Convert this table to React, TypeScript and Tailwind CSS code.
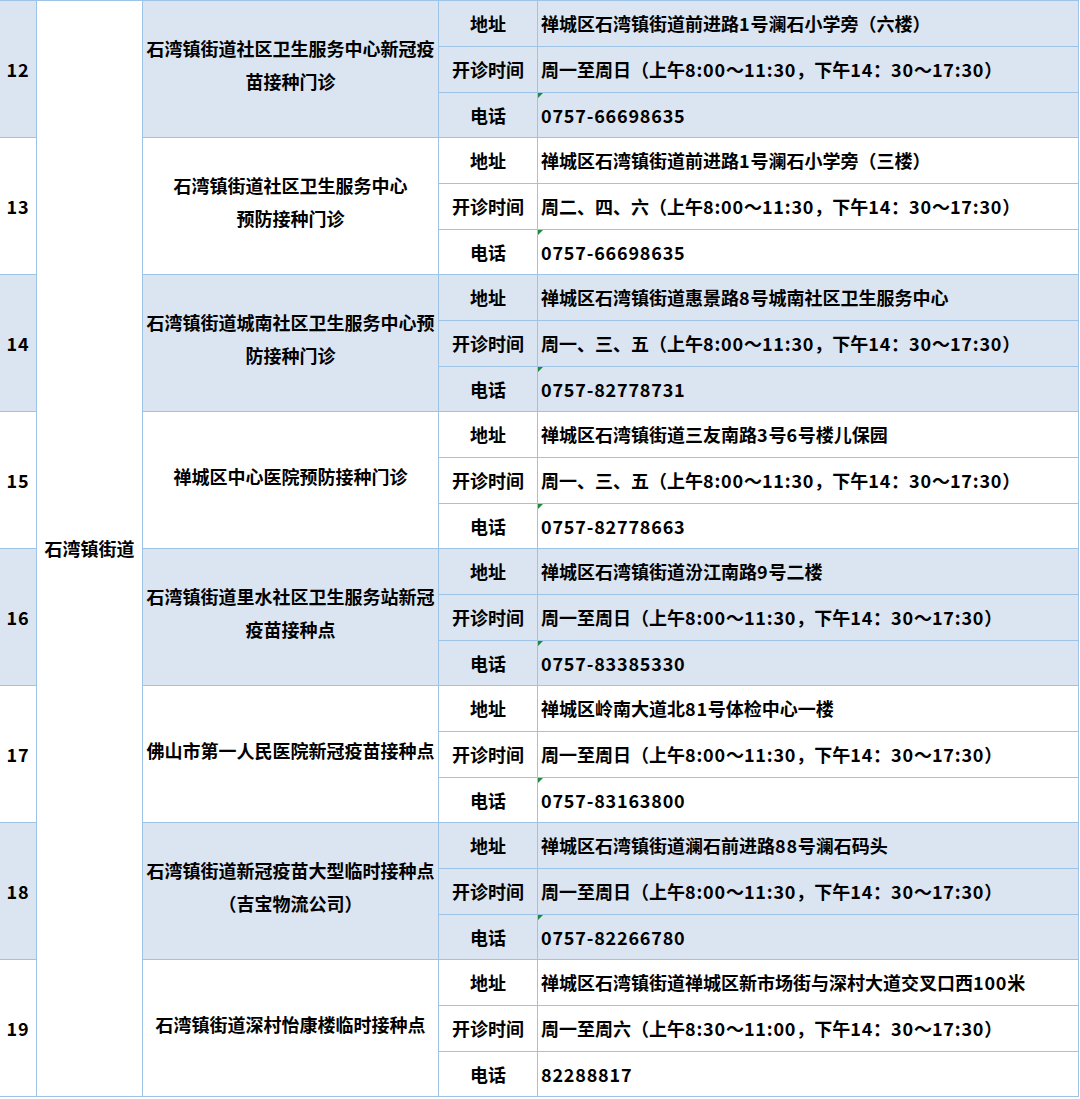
const LINE = 'bg-[#9dc3e6]';

interface Site {
  no: number;
  name: string[];
  address: string;
  hours: string;
  phone: string;
  mark: boolean;
}

const TIME = '（上午8:00～11:30，下午14：30～17:30）';

const sites: Site[] = [
  { no: 12, name: ['石湾镇街道社区卫生服务中心新冠疫', '苗接种门诊'], address: '禅城区石湾镇街道前进路1号澜石小学旁（六楼）', hours: '周一至周日' + TIME, phone: '0757-66698635', mark: true },
  { no: 13, name: ['石湾镇街道社区卫生服务中心', '预防接种门诊'], address: '禅城区石湾镇街道前进路1号澜石小学旁（三楼）', hours: '周二、四、六' + TIME, phone: '0757-66698635', mark: true },
  { no: 14, name: ['石湾镇街道城南社区卫生服务中心预', '防接种门诊'], address: '禅城区石湾镇街道惠景路8号城南社区卫生服务中心', hours: '周一、三、五' + TIME, phone: '0757-82778731', mark: true },
  { no: 15, name: ['禅城区中心医院预防接种门诊'], address: '禅城区石湾镇街道三友南路3号6号楼儿保园', hours: '周一、三、五' + TIME, phone: '0757-82778663', mark: true },
  { no: 16, name: ['石湾镇街道里水社区卫生服务站新冠', '疫苗接种点'], address: '禅城区石湾镇街道汾江南路9号二楼', hours: '周一至周日' + TIME, phone: '0757-83385330', mark: true },
  { no: 17, name: ['佛山市第一人民医院新冠疫苗接种点'], address: '禅城区岭南大道北81号体检中心一楼', hours: '周一至周日' + TIME, phone: '0757-83163800', mark: true },
  { no: 18, name: ['石湾镇街道新冠疫苗大型临时接种点', '（吉宝物流公司）'], address: '禅城区石湾镇街道澜石前进路88号澜石码头', hours: '周一至周日' + TIME, phone: '0757-82266780', mark: true },
  { no: 19, name: ['石湾镇街道深村怡康楼临时接种点'], address: '禅城区石湾镇街道禅城区新市场街与深村大道交叉口西100米', hours: '周一至周六（上午8:30～11:00，下午14：30～17:30）', phone: '82288817', mark: false },
];

// digits in the source are set a little wider than the CJK font gives them
const Text = ({ value }: { value: string }) => (
  <>
    {value.split(/([0-9:\-]+)/).map((part, i) =>
      /^[0-9:\-]+$/.test(part) ? (
        <span key={i} className="tracking-[0.8px]">{part}</span>
      ) : (
        <span key={i}>{part}</span>
      )
    )}
  </>
);

const InfoRow = ({ label, value, fill, height, mark }: { label: string; value: string; fill: string; height: string; mark?: boolean }) => (
  <div className={`flex gap-px ${height}`}>
    <div className={`w-[98px] flex items-center justify-center ${fill}`}>{label}</div>
    <div className={`relative w-[540px] flex items-center pl-[3px] whitespace-nowrap ${fill}`}>
      {mark && (
        <span className="absolute left-0 top-0 w-0 h-0 border-t-[5px] border-t-[#1e8a3a] border-r-[5px] border-r-transparent" />
      )}
      <Text value={value} />
    </div>
  </div>
);

export default function App() {
  return (
    <div
      className="w-[1080px] h-[1099px] bg-white text-black font-bold text-[18px] leading-[1.5]"
      style={{ fontFamily: '"Noto Sans CJK SC", "Microsoft YaHei", sans-serif' }}
    >
      <div className={`flex gap-px w-[1079px] pt-px pr-px pb-px ${LINE}`}>
        {/* numbers */}
        <div className="flex flex-col gap-px w-[36px]">
          {sites.map((s, i) => (
            <div
              key={s.no}
              className={`h-[136px] flex items-center justify-center tracking-[0.8px] ${i % 2 === 0 ? 'bg-[#dbe5f1]' : 'bg-white'}`}
            >
              {s.no}
            </div>
          ))}
        </div>

        {/* district */}
        <div className="w-[105px] bg-white flex items-center justify-center">石湾镇街道</div>

        {/* sites */}
        <div className="flex flex-col gap-px">
          {sites.map((s, i) => {
            const fill = i % 2 === 0 ? 'bg-[#dbe5f1]' : 'bg-white';
            return (
              <div key={s.no} className="flex gap-px h-[136px]">
                <div className={`w-[295px] flex flex-col items-center justify-center text-center pb-[8px] leading-[33px] ${fill}`}>
                  {s.name.map((line) => (
                    <div key={line} className="whitespace-nowrap">{line}</div>
                  ))}
                </div>
                <div className="flex flex-col gap-px">
                  <InfoRow label="地址" value={s.address} fill={fill} height="h-[45px]" />
                  <InfoRow label="开诊时间" value={s.hours} fill={fill} height="h-[45px]" />
                  <InfoRow label="电话" value={s.phone} fill={fill} height="h-[44px]" mark={s.mark} />
                </div>
              </div>
            );
          })}
        </div>
      </div>
    </div>
  );
}
